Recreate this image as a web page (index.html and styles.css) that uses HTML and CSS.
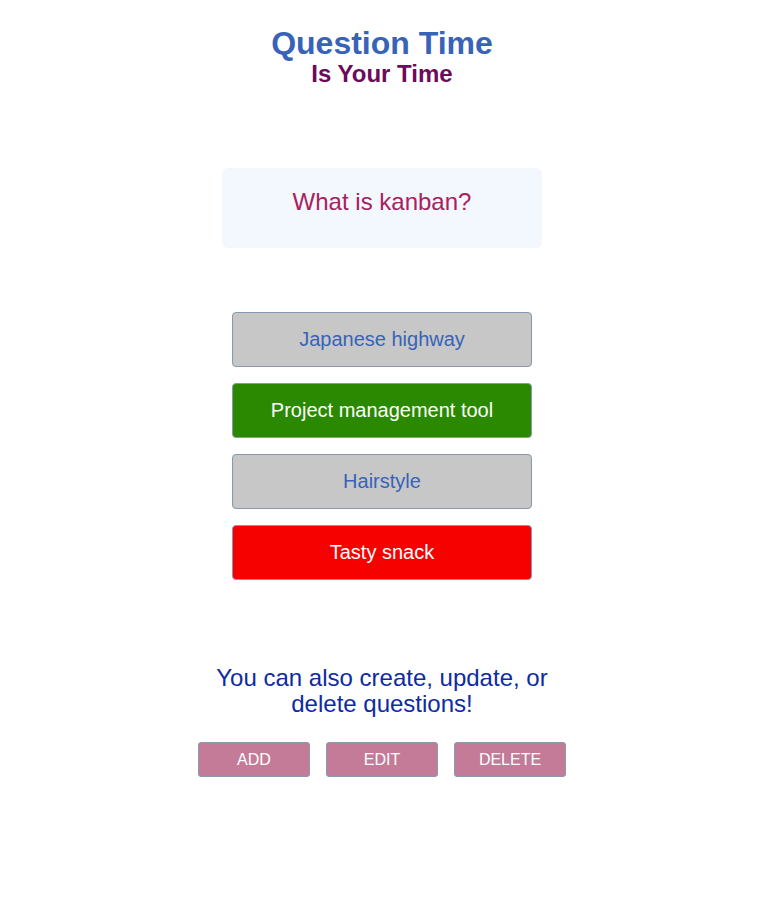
FILE: index.html
```html
<!DOCTYPE html>
<html lang="en">
<head>
<meta charset="utf-8">
<title>Question Time</title>
<link rel="stylesheet" href="styles.css">
</head>
<body>
  <main class="page">
    <header class="header">
      <h1 class="title">Question Time</h1>
      <h2 class="subtitle">Is Your Time</h2>
    </header>

    <section class="question">
      <p class="question-text">What is kanban?</p>
    </section>

    <section class="answers">
      <button class="answer">Japanese highway</button>
      <button class="answer answer-correct">Project management tool</button>
      <button class="answer">Hairstyle</button>
      <button class="answer answer-wrong">Tasty snack</button>
    </section>

    <section class="manage">
      <p class="manage-text">You can also create, update, or delete questions!</p>
      <div class="manage-actions">
        <button class="action">ADD</button>
        <button class="action">EDIT</button>
        <button class="action">DELETE</button>
      </div>
    </section>
  </main>
</body>
</html>
```

FILE: styles.css
```css
* {
  box-sizing: border-box;
}

html, body {
  margin: 0;
  padding: 0;
  background: #ffffff;
}

body {
  font-family: "Liberation Sans", Arial, Helvetica, sans-serif;
}

.page {
  display: flex;
  flex-direction: column;
  align-items: center;
  padding-top: 25px;
}

.header {
  display: flex;
  flex-direction: column;
  align-items: center;
}

.title {
  margin: 0;
  font-size: 32px;
  font-weight: bold;
  color: #3763b8;
}

.subtitle {
  margin: -2px 0 0;
  font-size: 24px;
  font-weight: bold;
  color: #6d0a5c;
}

.question {
  margin-top: 80px;
  width: 320px;
  height: 80px;
  padding-top: 20px;
  background: #f3f7fe;
  border-radius: 6px;
  text-align: center;
}

.question-text {
  margin: 0;
  font-size: 24px;
  color: #a7215f;
}

.answers {
  margin-top: 64px;
  display: flex;
  flex-direction: column;
  gap: 16px;
}

.answer {
  width: 300px;
  height: 55px;
  display: flex;
  align-items: center;
  justify-content: center;
  padding: 0;
  font-family: inherit;
  font-size: 20px;
  color: #3763b8;
  background: #c7c7c7;
  border: 1px solid #8898ae;
  border-radius: 4px;
}

.answer-correct {
  background: #2a8900;
  color: #ffffff;
}

.answer-wrong {
  background: #f70000;
  color: #ffffff;
}

.manage {
  margin-top: 85px;
  display: flex;
  flex-direction: column;
  align-items: center;
}

.manage-text {
  margin: 0;
  width: 360px;
  font-size: 24px;
  line-height: 26px;
  color: #0e2b9f;
  text-align: center;
}

.manage-actions {
  margin-top: 25px;
  display: flex;
  gap: 16px;
}

.action {
  width: 112px;
  height: 35px;
  padding: 0;
  font-family: inherit;
  font-size: 16px;
  color: #ffffff;
  background: #c47b98;
  border: 1px solid #8898ae;
  border-radius: 3px;
}
```
